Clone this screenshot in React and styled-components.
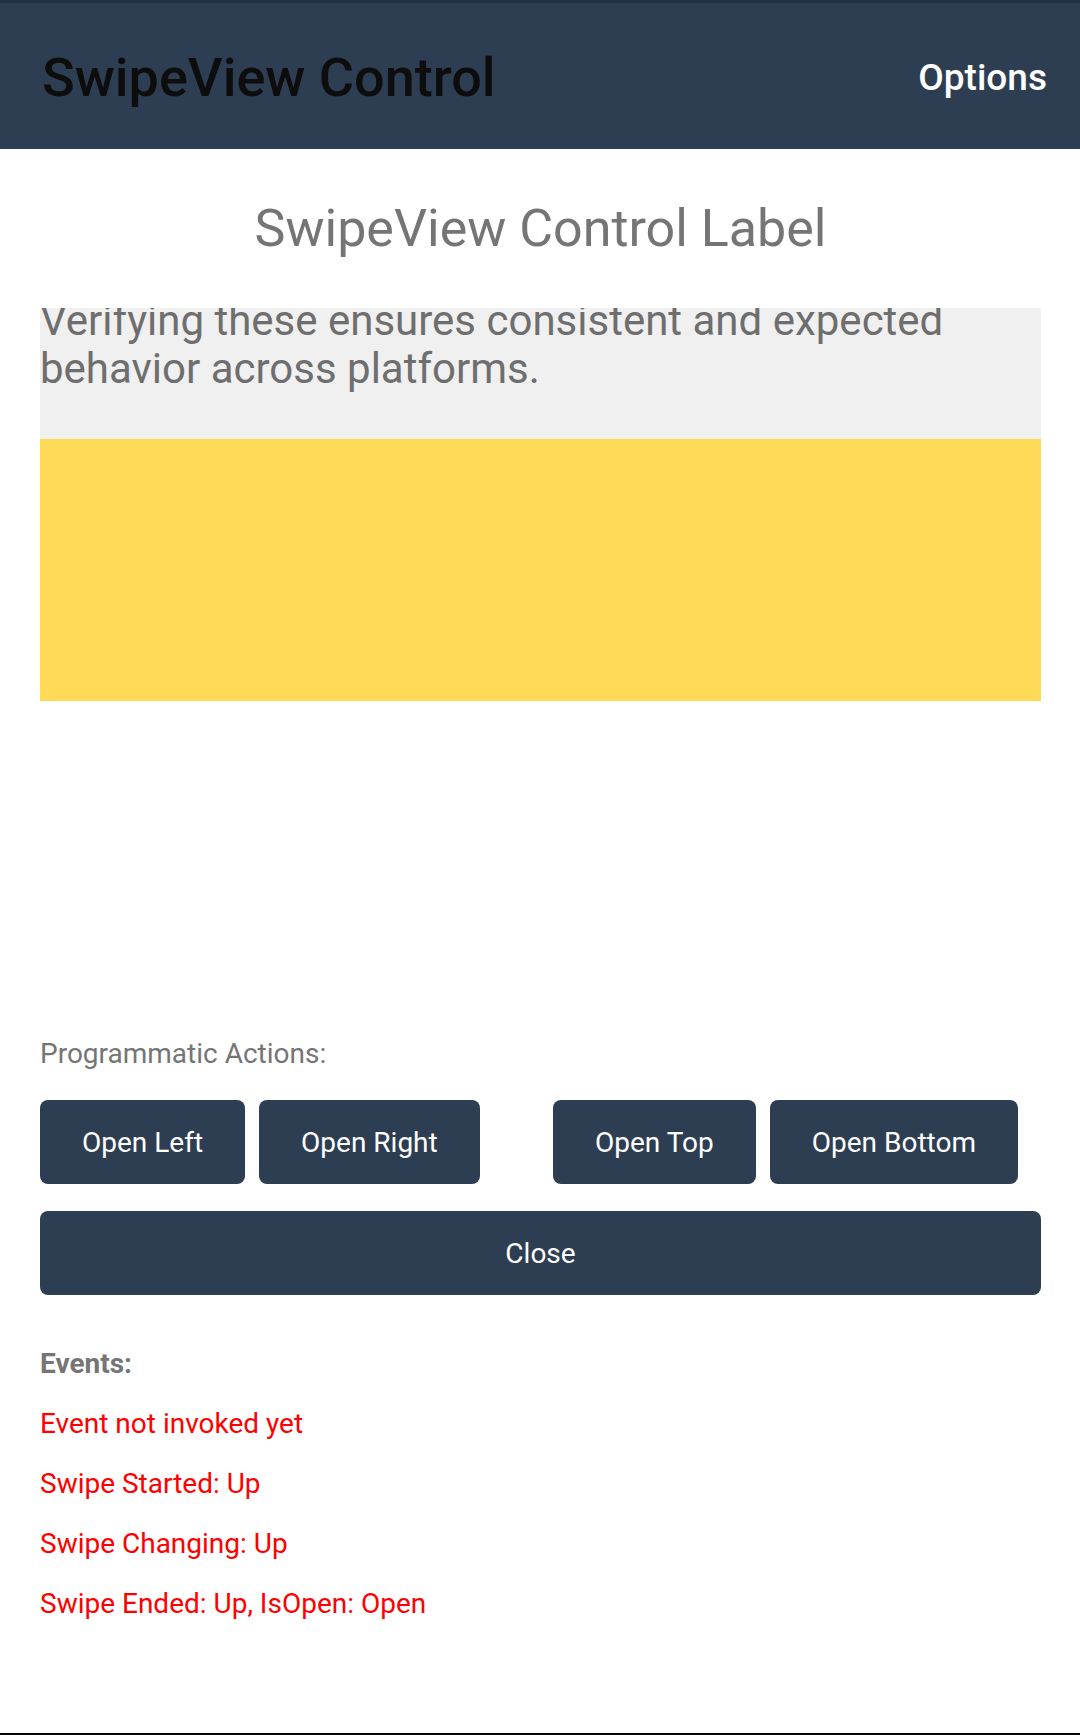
import React from "react";
import styled, { createGlobalStyle } from "styled-components";

const GlobalStyle = createGlobalStyle`
  html, body {
    margin: 0;
    padding: 0;
    background: #ffffff;
    font-family: Roboto, "Liberation Sans", Arial, sans-serif;
  }
`;

const Screen = styled.div`
  width: 1080px;
  height: 1735px;
  display: flex;
  flex-direction: column;
  box-sizing: border-box;
  border-bottom: 2px solid #000;
  overflow: hidden;
`;

const Toolbar = styled.header`
  height: 149px;
  box-sizing: border-box;
  border-top: 3px solid #1f3247;
  background: #2e3e52;
  display: flex;
  align-items: center;
  justify-content: space-between;
  padding: 2px 33px 0 42px;
`;

const Title = styled.h1`
  margin: 0;
  font-size: 54px;
  font-weight: 500;
  color: #0d0d0d;
`;

const ToolbarItem = styled.span`
  font-size: 37px;
  font-weight: 500;
  color: #ffffff;
`;

const Content = styled.main`
  padding: 0 39px 0 40px;
  display: flex;
  flex-direction: column;
`;

const Heading = styled.h2`
  margin: 49px 0 0;
  font-size: 52px;
  font-weight: 400;
  color: #757575;
  text-align: center;
  line-height: 62px;
`;

const SwipeArea = styled.section`
  margin-top: 48px;
  height: 393px;
  display: flex;
  flex-direction: column;
`;

const SwipeItems = styled.div`
  height: 131px;
  background: #f0f0f0;
  overflow: hidden;
`;

const SwipeText = styled.p`
  margin: -11px 0 0;
  font-size: 42px;
  line-height: 48px;
  color: #6e6e6e;
`;

const SwipeContent = styled.div`
  height: 262px;
  background: #ffda58;
`;

const SectionLabel = styled.div`
  margin-top: 336px;
  font-size: 28px;
  font-weight: ${(p) => (p.$bold ? 700 : 400)};
  color: #757575;
  line-height: 34px;
`;

const ButtonGrid = styled.div`
  margin-top: 29px;
  display: grid;
  grid-template-columns: 488px 1fr;
  column-gap: 25px;
`;

const ButtonRow = styled.div`
  display: flex;
  gap: 14px;
`;

const ActionButton = styled.button`
  height: 84px;
  padding: 0 42px;
  border: none;
  border-radius: 8px;
  background: #2e3e52;
  color: #ffffff;
  font-family: Roboto, "Liberation Sans", Arial, sans-serif;
  font-size: 28px;
  width: ${(p) => (p.$wide ? "100%" : "auto")};
`;

const CloseWrap = styled.div`
  margin-top: 27px;
`;

const EventsLabel = styled(SectionLabel)`
  margin-top: 52px;
`;

const EventList = styled.div`
  margin-top: 26px;
  display: flex;
  flex-direction: column;
  gap: 26px;
`;

const EventLine = styled.div`
  font-size: 28px;
  line-height: 34px;
  color: #ff0000;
`;

const events = [
  "Event not invoked yet",
  "Swipe Started: Up",
  "Swipe Changing: Up",
  "Swipe Ended: Up, IsOpen: Open",
];

export default function App() {
  return (
    <>
      <GlobalStyle />
      <Screen>
        <Toolbar>
          <Title>SwipeView Control</Title>
          <ToolbarItem>Options</ToolbarItem>
        </Toolbar>
        <Content>
          <Heading>SwipeView Control Label</Heading>
          <SwipeArea>
            <SwipeItems>
              <SwipeText>
                Verifying these ensures consistent and expected behavior across
                platforms.
              </SwipeText>
            </SwipeItems>
            <SwipeContent />
          </SwipeArea>
          <SectionLabel>Programmatic Actions:</SectionLabel>
          <ButtonGrid>
            <ButtonRow>
              <ActionButton>Open Left</ActionButton>
              <ActionButton>Open Right</ActionButton>
            </ButtonRow>
            <ButtonRow>
              <ActionButton>Open Top</ActionButton>
              <ActionButton>Open Bottom</ActionButton>
            </ButtonRow>
          </ButtonGrid>
          <CloseWrap>
            <ActionButton $wide>Close</ActionButton>
          </CloseWrap>
          <EventsLabel $bold>Events:</EventsLabel>
          <EventList>
            {events.map((e) => (
              <EventLine key={e}>{e}</EventLine>
            ))}
          </EventList>
        </Content>
      </Screen>
    </>
  );
}
